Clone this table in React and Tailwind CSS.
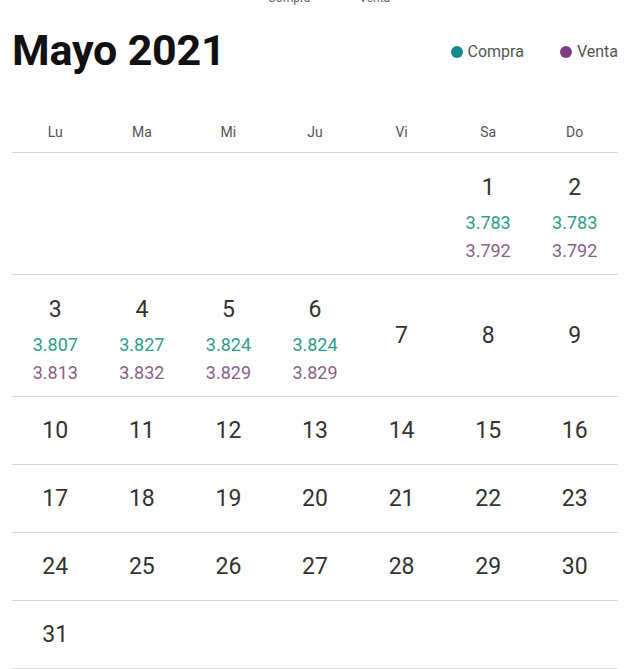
import React from "react";

const data = {
  1: ["3.783", "3.792"],
  2: ["3.783", "3.792"],
  3: ["3.807", "3.813"],
  4: ["3.827", "3.832"],
  5: ["3.824", "3.829"],
  6: ["3.824", "3.829"],
};

const weeks = [
  [null, null, null, null, null, 1, 2],
  [3, 4, 5, 6, 7, 8, 9],
  [10, 11, 12, 13, 14, 15, 16],
  [17, 18, 19, 20, 21, 22, 23],
  [24, 25, 26, 27, 28, 29, 30],
  [31, null, null, null, null, null, null],
];

const days = ["Lu", "Ma", "Mi", "Ju", "Vi", "Sa", "Do"];

function Cell({ day }) {
  if (day === null) return <div />;
  const v = data[day];
  if (v) {
    return (
      <div className="flex flex-col items-center pt-[20px]">
        <div className="text-[23px] leading-[30px] text-[#333]">{day}</div>
        <div className="mt-[6px] text-[18px] leading-[28px] text-[#2f9c8e]">{v[0]}</div>
        <div className="text-[18px] leading-[28px] text-[#8b5f8d]">{v[1]}</div>
      </div>
    );
  }
  return (
    <div className="flex items-center justify-center">
      <div className="text-[23px] leading-[30px] text-[#333]">{day}</div>
    </div>
  );
}

export default function App() {
  return (
    <div
      className="w-[640px] h-[669px] overflow-hidden bg-white"
      style={{ fontFamily: "Roboto, 'Liberation Sans', sans-serif" }}
    >
      <div className="h-[5px] overflow-hidden flex items-end">
        <div className="flex text-[12px] leading-[14px] text-[#666]">
          <span className="ml-[268px]">Compra</span>
          <span className="ml-[49px]">Venta</span>
        </div>
      </div>
      <div className="pl-3 pr-[22px]">
        <div className="flex items-center justify-between h-[88px] pt-[2px]">
          <h1 className="text-[43px] font-bold leading-none text-[#111] tracking-[-0.2px]">Mayo 2021</h1>
          <div className="flex items-center text-[16px] text-[#555] pt-[4px]">
            <span className="w-[12px] h-[12px] rounded-full bg-[#17888f] mr-[5px]"></span>
            <span>Compra</span>
            <span className="w-[12px] h-[12px] rounded-full bg-[#813e86] ml-[36px] mr-[5px]"></span>
            <span>Venta</span>
          </div>
        </div>
        <div className="grid grid-cols-7 h-[60px] border-b-[1.5px] border-[#d6d6d6] pt-[20px]">
          {days.map((d) => (
            <div key={d} className="flex items-center justify-center text-[14px] text-[#555]">
              {d}
            </div>
          ))}
        </div>
        {weeks.map((w, i) => (
          <div
            key={i}
            className={`grid grid-cols-7 border-b-[1.5px] border-[#d6d6d6] ${i < 2 ? "h-[122px]" : "h-[68px]"}`}
          >
            {w.map((d, j) => (
              <Cell key={j} day={d} />
            ))}
          </div>
        ))}
      </div>
    </div>
  );
}
